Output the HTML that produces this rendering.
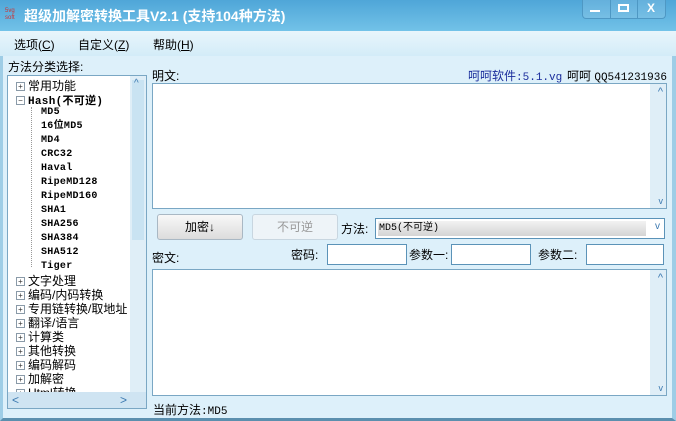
<!DOCTYPE html><html><head><meta charset="utf-8"><style>
*{margin:0;padding:0;box-sizing:border-box}
body{width:676px;height:421px;overflow:hidden;font-family:"Liberation Sans","Noto Sans CJK SC",sans-serif;font-size:12px;background:#fff;position:relative}
.a{position:absolute}
#title{left:0;top:0;width:676px;height:31px;background:linear-gradient(#4fa6d8,#72c2e8);}
#menu{left:0;top:31px;width:676px;height:25px;background:linear-gradient(#e8f5fb,#d3ecf8)}
#body{left:0;top:56px;width:676px;height:365px;background:#ddf0fa;border-left:3px solid #9ecde6;border-right:4px solid #9ecde6;border-bottom:3px solid #5b8fae}
.box{background:#fff;border:1px solid #7aa7c4}
.vs{background:#dfeef7}
.tr{position:absolute;left:0;white-space:nowrap;font-size:12px;line-height:14px}
.pl{display:inline-block;width:9px;height:9px;border:1px solid #8a9aa8;font-size:8px;line-height:7px;text-align:center;vertical-align:middle;background:#fff;color:#333;margin-right:3px}
.mono{font-family:"Liberation Mono","Noto Sans CJK SC",monospace;font-size:10px}
.tree .mono{font-weight:bold;font-size:10px;letter-spacing:.3px}
.inp{background:#fff;border:1px solid #5b93b8}
.btn{border:1px solid #a9b8c4;border-radius:3px;background:linear-gradient(#f8f8f8,#dcdcdc);text-align:center;line-height:24px;font-size:12px}
</style></head><body>
<div id="title" class="a"></div>
<div class="a" style="left:5px;top:8px;width:16px;height:14px;font-size:6px;color:#c33;line-height:7px">5vg<br>soft</div>
<div class="a" style="left:24px;top:6px;color:#fff;font-size:14px;font-weight:bold">超级加解密转换工具V2.1 (支持104种方法)</div>
<div class="a" style="left:582px;top:0;width:84px;height:19px;border-bottom-left-radius:4px;border-bottom-right-radius:4px;background:rgba(255,255,255,.12);border:1px solid #4e98c4;border-top:none"></div>
<div class="a" style="left:610px;top:0;width:1px;height:18px;background:#4e98c4"></div>
<div class="a" style="left:637px;top:0;width:1px;height:18px;background:#4e98c4"></div>
<div class="a" style="left:590px;top:10px;width:10px;height:2px;background:#fff"></div>
<div class="a" style="left:618px;top:4px;width:11px;height:8px;border:2px solid #fff"></div>
<div class="a" style="left:647px;top:1px;color:#fff;font-weight:bold;font-size:12px">X</div>
<div id="menu" class="a"></div>
<div class="a" style="left:14px;top:36px">选项(<u>C</u>)</div>
<div class="a" style="left:78px;top:36px">自定义(<u>Z</u>)</div>
<div class="a" style="left:153px;top:36px">帮助(<u>H</u>)</div>
<div id="body" class="a"></div>
<div class="a" style="left:8px;top:58px">方法分类选择:</div>
<div class="a box tree" style="left:7px;top:75px;width:140px;height:334px;overflow:hidden">
 <div class="a" style="left:0;top:0;width:123px;height:316px;overflow:hidden">
  <div class="tr" style="top:3px;left:8px"><span class="pl">+</span>常用功能</div>
  <div class="tr" style="top:17px;left:8px"><span class="pl">−</span><span class="mono" style="font-size:11px">Hash(不可逆)</span></div>
  <div class="a" style="left:23px;top:31px;width:1px;height:160px;border-left:1px dotted #999"></div>
  <div class="tr mono" style="top:30px;left:33px">MD5</div>
  <div class="tr mono" style="top:44px;left:33px">16位MD5</div>
  <div class="tr mono" style="top:58px;left:33px">MD4</div>
  <div class="tr mono" style="top:72px;left:33px">CRC32</div>
  <div class="tr mono" style="top:86px;left:33px">Haval</div>
  <div class="tr mono" style="top:100px;left:33px">RipeMD128</div>
  <div class="tr mono" style="top:114px;left:33px">RipeMD160</div>
  <div class="tr mono" style="top:128px;left:33px">SHA1</div>
  <div class="tr mono" style="top:142px;left:33px">SHA256</div>
  <div class="tr mono" style="top:156px;left:33px">SHA384</div>
  <div class="tr mono" style="top:170px;left:33px">SHA512</div>
  <div class="tr mono" style="top:184px;left:33px">Tiger</div>
  <div class="tr" style="top:198px;left:8px"><span class="pl">+</span>文字处理</div>
  <div class="tr" style="top:212px;left:8px"><span class="pl">+</span>编码/内码转换</div>
  <div class="tr" style="top:226px;left:8px"><span class="pl">+</span>专用链转换/取地址</div>
  <div class="tr" style="top:240px;left:8px"><span class="pl">+</span>翻译/语言</div>
  <div class="tr" style="top:254px;left:8px"><span class="pl">+</span>计算类</div>
  <div class="tr" style="top:268px;left:8px"><span class="pl">+</span>其他转换</div>
  <div class="tr" style="top:282px;left:8px"><span class="pl">+</span>编码解码</div>
  <div class="tr" style="top:296px;left:8px"><span class="pl">+</span>加解密</div>
  <div class="tr" style="top:310px;left:8px"><span class="pl">+</span>Html转换</div>
 </div>
 <div class="a vs" style="left:122px;top:0;width:16px;height:316px"><div style="margin:4px 2px;height:160px;background:#c9e3f2"></div></div>
 <div class="a" style="left:126px;top:2px;color:#3a78b0;font-size:10px">^</div>
 <div class="a vs" style="left:0;top:316px;width:138px;height:16px;background:#cfe4f2"></div>
 <div class="a" style="left:4px;top:317px;color:#3a78b0">&lt;</div>
 <div class="a" style="left:112px;top:317px;color:#3a78b0">&gt;</div>
</div>
<div class="a" style="left:152px;top:67px">明文:</div>
<div class="a" style="left:468px;top:67px;color:#1a2d9c"><span>呵呵软件</span><span class="mono" style="font-size:11px">:5.1.vg</span></div>
<div class="a" style="left:567px;top:67px">呵呵 <span class="mono" style="font-size:11px">QQ541231936</span></div>
<div class="a box" style="left:152px;top:83px;width:515px;height:126px"><div class="a vs" style="right:0;top:0;width:16px;height:124px"></div><div class="a" style="right:3px;top:2px;color:#3a78b0;font-size:11px">^</div><div class="a" style="right:3px;bottom:2px;color:#3a78b0;font-size:9px">v</div></div>
<div class="a btn" style="left:157px;top:214px;width:86px;height:26px">加密↓</div>
<div class="a btn" style="left:252px;top:214px;width:86px;height:26px;color:#999;background:#eef4f8;border-color:#c8d6e0">不可逆</div>
<div class="a" style="left:341px;top:220px">方法:</div>
<div class="a inp" style="left:375px;top:218px;width:290px;height:21px"><div style="position:absolute;left:2px;top:2px;width:268px;height:15px;background:linear-gradient(#f2f2f2,#d4d4d4);line-height:15px;padding-left:1px" class="mono">MD5(不可逆)</div><div class="a" style="right:4px;top:2px;color:#3a78b0;font-size:10px">v</div></div>
<div class="a" style="left:152px;top:249px">密文:</div>
<div class="a" style="left:291px;top:246px">密码:</div>
<div class="a inp" style="left:327px;top:244px;width:80px;height:21px"></div>
<div class="a" style="left:409px;top:246px">参数一:</div>
<div class="a inp" style="left:451px;top:244px;width:80px;height:21px"></div>
<div class="a" style="left:538px;top:246px">参数二:</div>
<div class="a inp" style="left:586px;top:244px;width:78px;height:21px"></div>
<div class="a box" style="left:152px;top:269px;width:515px;height:127px"><div class="a vs" style="right:0;top:0;width:16px;height:125px"></div><div class="a" style="right:3px;top:2px;color:#3a78b0;font-size:11px">^</div><div class="a" style="right:3px;bottom:2px;color:#3a78b0;font-size:9px">v</div></div>
<div class="a" style="left:153px;top:401px">当前方法<span class="mono" style="font-size:11px">:MD5</span></div>
</body></html>
